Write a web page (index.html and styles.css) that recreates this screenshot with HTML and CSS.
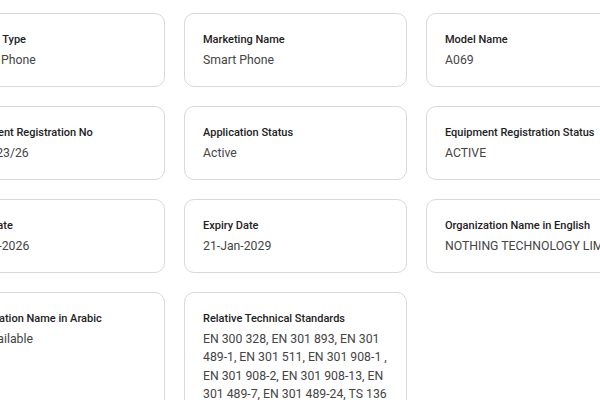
FILE: index.html
```html
<!DOCTYPE html>
<html lang="en">
<head>
    <meta charset="UTF-8">
    <meta name="viewport" content="width=device-width, initial-scale=1.0">
    <title>Equipment Details</title>
    <link rel="stylesheet" href="styles.css">
</head>
<body>
    <div class="details">
        <div class="card">
            <div class="label">Product Type</div>
            <div class="value">Mobile Phone</div>
        </div>
        <div class="card">
            <div class="label">Marketing Name</div>
            <div class="value">Smart Phone</div>
        </div>
        <div class="card">
            <div class="label">Model Name</div>
            <div class="value">A069</div>
        </div>
        <div class="card">
            <div class="label">Equipment Registration No</div>
            <div class="value">ER45123/26</div>
        </div>
        <div class="card">
            <div class="label">Application Status</div>
            <div class="value">Active</div>
        </div>
        <div class="card">
            <div class="label">Equipment Registration Status</div>
            <div class="value">ACTIVE</div>
        </div>
        <div class="card">
            <div class="label">Issue Date</div>
            <div class="value">21-Jan-2026</div>
        </div>
        <div class="card">
            <div class="label">Expiry Date</div>
            <div class="value">21-Jan-2029</div>
        </div>
        <div class="card">
            <div class="label">Organization Name in English</div>
            <div class="value nowrap">NOTHING TECHNOLOGY LIMITED</div>
        </div>
        <div class="card">
            <div class="label">Organization Name in Arabic</div>
            <div class="value">Not Available</div>
        </div>
        <div class="card">
            <div class="label">Relative Technical Standards</div>
            <div class="value">EN 300 328, EN 301 893, EN 301 489-1, EN 301 511, EN 301 908-1 , EN 301 908-2, EN 301 908-13, EN 301 489-7, EN 301 489-24, TS 136 521-1, IEC 62368-1</div>
        </div>
    </div>
</body>
</html>
```

FILE: styles.css
```css
body {
    margin: 0;
    background-color: #ffffff;
    font-family: Roboto, "Liberation Sans", sans-serif;
    color: #333333;
    overflow: hidden;
}
.details {
    display: grid;
    grid-template-columns: repeat(3, 223px);
    grid-template-rows: repeat(3, 74px) auto;
    gap: 19px 19px;
    margin-left: -58px;
    padding-top: 13px;
    padding-bottom: 20px;
}
.card {
    background: #ffffff;
    border: 1px solid #d9d9d9;
    border-radius: 10px;
    padding: 18px 18px 16px;
    overflow: hidden;
}
.label {
    font-size: 11px;
    font-weight: 500;
    color: #222222;
    line-height: 16px;
    margin-bottom: 3px;
}
.value {
    font-size: 12.25px;
    line-height: 18.4px;
    color: #444444;
}
.nowrap {
    white-space: nowrap;
}
```
